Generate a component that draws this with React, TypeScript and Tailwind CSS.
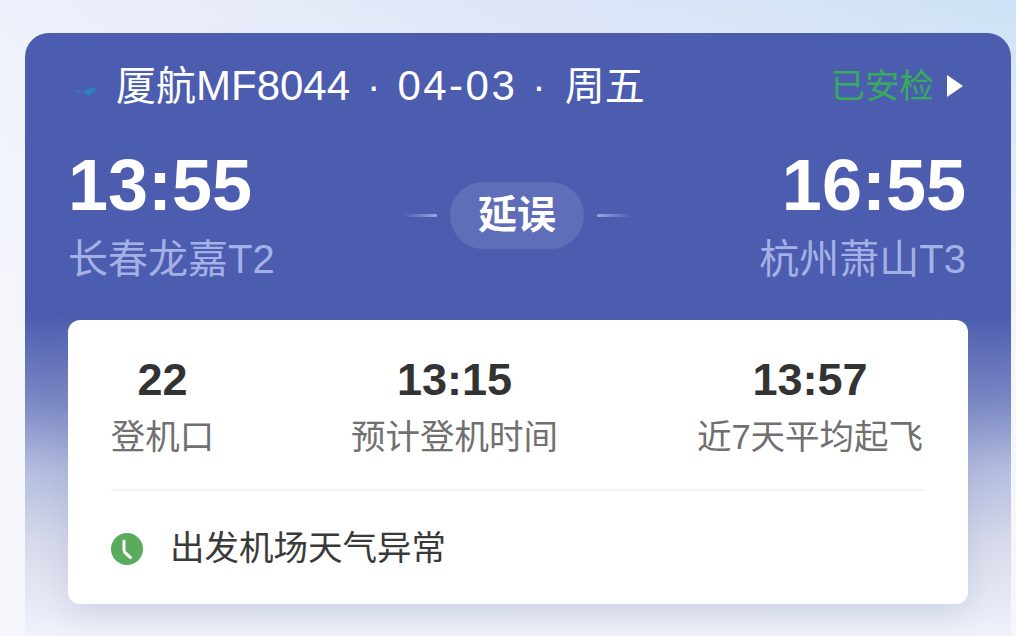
const FONT = "font-['Liberation_Sans','Noto_Sans_CJK_SC',sans-serif]";

function Stat({value, label, className}: {value: string; label: string; className: string}) {
  return (
    <div className={`flex flex-col items-center whitespace-nowrap ${className}`}>
      <div className="text-[45px] font-bold leading-[50px] text-[#333333]">{value}</div>
      <div className="mt-[10px] text-[34.5px] leading-[44px] text-[#707070]">{label}</div>
    </div>
  );
}

function Dash({flip}: {flip?: boolean}) {
  return (
    <span
      className={`h-[3px] w-[34px] rounded-full ${
        flip
          ? 'bg-gradient-to-r from-[#9aa6dc] to-[#4c5db0]'
          : 'bg-gradient-to-r from-[#4c5db0] to-[#9aa6dc]'
      }`}
    />
  );
}

export default function App() {
  return (
    <div
      className={`h-[636px] w-[1016px] overflow-hidden bg-[linear-gradient(180deg,rgba(246,247,252,0)_0%,#f6f7fc_60%),linear-gradient(90deg,#eef1fb,#dfe5f7_50%,#cde2f6)] pt-[33px] pl-[25px] ${FONT}`}
    >
      <div className="h-[603px] w-[986px] rounded-t-[24px] bg-[linear-gradient(180deg,#4c5db0_47%,#7a88c4_61%,#b4bde0_72.5%,#d5d9ea_84%,#f0f2fb_100%)] px-[43px]">
        <div className="flex h-[106px] items-center justify-between">
          <div className="flex items-center whitespace-nowrap text-[40px] leading-none text-white">
            <svg width="32" height="20" viewBox="0 0 32 20" className="mt-[8px] mr-[16px]">
              <path d="M6 11c5-1 9 0 12 3l2 2c4-2 8-6 10-10-4 2-8 2-11 3-1 2-3 3-5 3-3 0-6 0-8-1z" fill="#2f7fc4" />
            </svg>
            <span>
              厦航<span className="text-[42px]">MF8044</span>
            </span>
            <span className="ml-[17px]">·</span>
            <span className="ml-[17px] text-[42px] tracking-[2.5px]">04-03</span>
            <span className="ml-[15px]">·</span>
            <span className="ml-[19px]">周五</span>
          </div>
          <div className="mr-[5px] flex items-center">
            <span className="text-[34.5px] leading-none text-[#36ab5c]">已安检</span>
            <svg width="16" height="24" viewBox="0 0 16 24" className="ml-[13px]">
              <path d="M0 1l16 11L0 23z" fill="#ffffff" />
            </svg>
          </div>
        </div>

        <div className="mt-[6px] flex items-start justify-between">
          <div>
            <div className="text-[72px] font-bold leading-[80px] text-white">13:55</div>
            <div className="mt-[12px] whitespace-nowrap text-[40px] leading-[44px] text-[#a5b1e6]">长春龙嘉T2</div>
          </div>
          <div className="mt-[37px] flex items-center gap-[13px]">
            <Dash />
            <span className="flex h-[67px] w-[134px] items-center justify-center rounded-full bg-[#5f6eb8] text-[39px] font-bold text-white">
              延误
            </span>
            <Dash flip />
          </div>
          <div className="mr-[2px] text-right">
            <div className="text-[72px] font-bold leading-[80px] text-white">16:55</div>
            <div className="mt-[12px] whitespace-nowrap text-[40px] leading-[44px] text-[#a5b1e6]">杭州萧山T3</div>
          </div>
        </div>

        <div className="mt-[39px] h-[284px] w-[900px] rounded-[12px] bg-white px-[43px] shadow-[0_10px_30px_rgba(110,120,160,0.2)]">
          <div className="flex h-[171px] items-center justify-between border-b-2 border-[#f3f3f5] pt-[4px]">
            <Stat value="22" label="登机口" className="w-[103px]" />
            <Stat value="13:15" label="预计登机时间" className="mr-[2px] w-[207px]" />
            <Stat value="13:57" label="近7天平均起飞" className="mr-[2px] w-[226px]" />
          </div>
          <div className="flex h-[113px] items-center pt-[2px]">
            <svg width="32" height="32" viewBox="0 0 32 32">
              <circle cx="16" cy="16" r="16" fill="#5aab5c" />
              <path d="M13 8v9c0 2 1 3 2.500 4l4 3.500" fill="none" stroke="#ffffff" strokeWidth="3" strokeLinecap="round" strokeLinejoin="round" />
            </svg>
            <span className="ml-[27px] whitespace-nowrap text-[34.5px] leading-none text-[#3a3a3a]">出发机场天气异常</span>
          </div>
        </div>
      </div>
    </div>
  );
}
